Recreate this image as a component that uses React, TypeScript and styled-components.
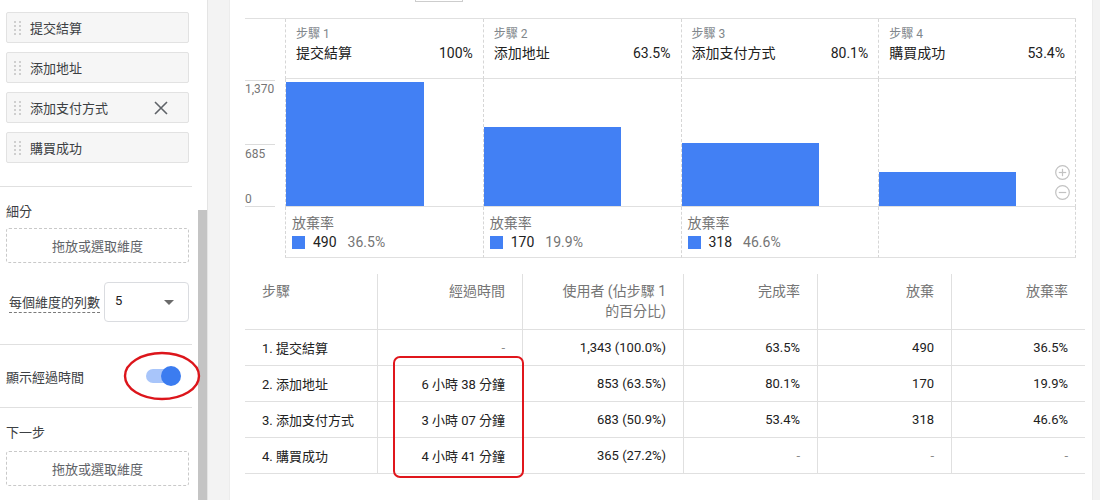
import React from 'react';
import styled, { createGlobalStyle } from 'styled-components';

const FONT = `Roboto, "Noto Sans CJK TC", "Noto Sans", sans-serif`;
const BLUE = '#4280f4';
const GRID = '#e0e0e0';
const DASH = '#d6d6d6';

const Global = createGlobalStyle`
  html, body { margin: 0; padding: 0; }
  body { font-family: ${FONT}; background: #f3f3f3; color: #212121; }
  * { box-sizing: border-box; }
`;

const Page = styled.div`
  display: flex;
  width: 1100px;
  height: 500px;
  overflow: hidden;
  background: #f3f3f3;
`;

/* ---------- Sidebar ---------- */
const Sidebar = styled.aside`
  width: 208px;
  flex: none;
  background: #fff;
  border-right: 1px solid #e4e4e4;
  display: flex;
`;
const SidebarContent = styled.div`
  width: 192px;
  flex: none;
  display: flex;
  flex-direction: column;
`;
const ScrollTrack = styled.div`
  width: 9px;
  margin-left: 6px;
  display: flex;
  flex-direction: column;
`;
const ScrollThumb = styled.div`
  margin-top: 210px;
  flex: 1;
  background: #c4c4c4;
`;
const StepList = styled.div`
  display: flex;
  flex-direction: column;
  gap: 9px;
  padding: 12px 3px 0 6px;
`;
const StepItem = styled.div`
  height: 31px;
  display: flex;
  align-items: center;
  padding-left: 7px;
  background: #f6f6f6;
  border: 1px solid #e2e2e2;
  border-radius: 2px;
  font-size: 13px;
  color: #3c4043;
`;
const DragHandle = styled.span`
  display: grid;
  grid-template-columns: 2px 2px;
  column-gap: 3px;
  row-gap: 2px;
  margin-right: 9px;
  i {
    width: 2px;
    height: 2px;
    background: #cfcfcf;
  }
`;
const RemoveButton = styled.span`
  margin-left: auto;
  margin-right: 20px;
  display: flex;
  color: #5f6368;
`;
const Divider = styled.div<{ $mt: number }>`
  height: 1px;
  background: ${GRID};
  margin-top: ${(p) => p.$mt}px;
`;
const Section = styled.div`
  padding: 16px 3px 0 6px;
  display: flex;
  flex-direction: column;
`;
const SectionLabel = styled.div`
  font-size: 13px;
  line-height: 18px;
  color: #3c4043;
`;
const DropZone = styled.div<{ $mt: number }>`
  margin-top: ${(p) => p.$mt}px;
  height: 35px;
  border: 1px dashed #c9c9c9;
  border-radius: 3px;
  display: flex;
  align-items: center;
  justify-content: center;
  font-size: 13px;
  color: #5f6368;
`;
const RowsControl = styled.div`
  margin-top: 19px;
  display: flex;
  align-items: center;
  justify-content: space-between;
`;
const UnderlinedLabel = styled.span`
  margin-left: 3px;
  margin-top: 4px;
  font-size: 13px;
  line-height: 16px;
  color: #3c4043;
  border-bottom: 1px dashed #7a7a7a;
  padding-bottom: 1px;
`;
const SelectBox = styled.div`
  width: 85px;
  height: 40px;
  border: 1px solid #dadce0;
  border-radius: 4px;
  display: flex;
  align-items: center;
  justify-content: space-between;
  padding: 0 14px 3px 10px;
  font-size: 13px;
  color: #212121;
`;
const Caret = styled.span`
  width: 0;
  height: 0;
  margin-top: 4px;
  border-left: 5px solid transparent;
  border-right: 5px solid transparent;
  border-top: 5px solid #6b6b6b;
`;
const ToggleRow = styled.div`
  height: 62px;
  display: flex;
  align-items: center;
  justify-content: space-between;
  padding: 0 11px 0 6px;
  font-size: 13px;
  color: #3c4043;
`;
const Toggle = styled.span`
  position: relative;
  width: 35px;
  height: 20px;
  display: flex;
  align-items: center;
`;
const ToggleTrack = styled.span`
  width: 34px;
  height: 14px;
  border-radius: 7px;
  background: #a8c5fa;
`;
const ToggleKnob = styled.span`
  position: absolute;
  right: 0;
  top: 0;
  width: 20px;
  height: 20px;
  border-radius: 50%;
  background: #3b7cf0;
`;
const Annotation = styled.svg`
  position: absolute;
  left: -23px;
  top: -15px;
  overflow: visible;
  pointer-events: none;
`;

/* ---------- Main card ---------- */
const Card = styled.main`
  margin-left: 21px;
  width: 864px;
  flex: none;
  background: #fff;
  border-left: 1px solid #ececec;
  border-right: 1px solid #ececec;
  padding-left: 15px;
  display: flex;
  flex-direction: column;
`;
const TopStrip = styled.div`
  height: 18px;
  display: flex;
`;
const TabStub = styled.span`
  margin-left: 170px;
  width: 48px;
  height: 2px;
  border: 1px solid #cdcdcd;
  border-top: none;
`;
const Chart = styled.div`
  width: 831px;
  display: grid;
  grid-template-columns: 40px repeat(4, 1fr);
  grid-template-rows: 60px 128px 51px;
  border-top: 1px solid ${GRID};
`;
const AxisCell = styled.div`
  position: relative;
`;
const AxisLine = styled.span<{ $top: number }>`
  position: absolute;
  left: 0;
  top: ${(p) => p.$top}px;
  width: 30px;
  border-top: 1px solid #dcdcdc;
`;
const AxisLabel = styled.span<{ $top: number }>`
  position: absolute;
  left: 0;
  top: ${(p) => p.$top}px;
  font-size: 12px;
  line-height: 14px;
  color: #757575;
`;
const ColumnCell = styled.div<{ $last?: boolean }>`
  border-left: 1px dashed ${DASH};
  border-right: ${(p) => (p.$last ? `1px dashed ${DASH}` : 'none')};
  border-bottom: 1px solid ${GRID};
  min-width: 0;
`;
const HeaderCell = styled(ColumnCell)`
  padding: 7px 10px 0 10px;
`;
const StepLabel = styled.div`
  font-size: 12px;
  line-height: 16px;
  color: #80868b;
`;
const StepNameRow = styled.div`
  margin-top: 1px;
  display: flex;
  justify-content: space-between;
  font-size: 14px;
  line-height: 20px;
  color: #212121;
`;
const PlotCell = styled(ColumnCell)`
  position: relative;
  display: flex;
  align-items: flex-end;
`;
const Bar = styled.div`
  width: 70%;
  background: ${BLUE};
`;
const ZoomControls = styled.div`
  position: absolute;
  right: 5px;
  top: 86px;
  display: flex;
  flex-direction: column;
  gap: 5px;
`;
const FooterCell = styled(ColumnCell)`
  padding: 7px 6px 0 6px;
`;
const FooterLabel = styled.div`
  font-size: 14px;
  line-height: 18px;
  color: #757575;
`;
const LegendRow = styled.div`
  margin-top: 1px;
  height: 18px;
  display: flex;
  align-items: center;
  font-size: 14px;
`;
const Swatch = styled.span`
  width: 13px;
  height: 13px;
  background: ${BLUE};
  margin-right: 8px;
`;
const Count = styled.span`
  color: #212121;
`;
const Rate = styled.span`
  margin-left: 11px;
  color: #757575;
`;

/* ---------- Table ---------- */
const TableWrap = styled.div`
  position: relative;
  margin-top: 16px;
  width: 840px;
`;
const TableGrid = styled.div`
  display: grid;
  grid-template-columns: 132px 145px 161px 134px 134px 134px;
`;
const TH = styled.div<{ $first?: boolean }>`
  height: 56px;
  padding: 7px 17px 0 17px;
  font-size: 14px;
  line-height: 20px;
  color: #757575;
  text-align: ${(p) => (p.$first ? 'left' : 'right')};
  border-bottom: 1px solid ${GRID};
  border-left: ${(p) => (p.$first ? 'none' : `1px solid ${GRID}`)};
`;
const TD = styled.div<{ $first?: boolean; $muted?: boolean }>`
  height: 36px;
  display: flex;
  align-items: center;
  justify-content: ${(p) => (p.$first ? 'flex-start' : 'flex-end')};
  padding: 0 17px;
  font-size: 13px;
  color: ${(p) => (p.$muted ? '#8a8a8a' : '#212121')};
  border-bottom: 1px solid ${GRID};
  border-left: ${(p) => (p.$first ? 'none' : `1px solid ${GRID}`)};
`;
const Highlight = styled.div`
  position: absolute;
  left: 148px;
  top: 82px;
  width: 131px;
  height: 122px;
  border: 2.5px solid #e0161c;
  border-radius: 7px;
  pointer-events: none;
`;

/* ---------- Data ---------- */
const steps = [
  { n: 1, name: '提交結算', pct: '100%', users: 1343, drop: '490', dropRate: '36.5%' },
  { n: 2, name: '添加地址', pct: '63.5%', users: 853, drop: '170', dropRate: '19.9%' },
  { n: 3, name: '添加支付方式', pct: '80.1%', users: 683, drop: '318', dropRate: '46.6%' },
  { n: 4, name: '購買成功', pct: '53.4%', users: 365, drop: null, dropRate: null },
];

const rows = [
  ['1. 提交結算', '-', '1,343 (100.0%)', '63.5%', '490', '36.5%'],
  ['2. 添加地址', '6 小時 38 分鐘', '853 (63.5%)', '80.1%', '170', '19.9%'],
  ['3. 添加支付方式', '3 小時 07 分鐘', '683 (50.9%)', '53.4%', '318', '46.6%'],
  ['4. 購買成功', '4 小時 41 分鐘', '365 (27.2%)', '-', '-', '-'],
];

const MAX = 1370;
const PLOT_H = 127;

const Handle = () => (
  <DragHandle>
    {Array.from({ length: 8 }).map((_, i) => (
      <i key={i} />
    ))}
  </DragHandle>
);

const CircleIcon = ({ plus }: { plus?: boolean }) => (
  <svg width="15" height="15" viewBox="0 0 15 15">
    <circle cx="7.5" cy="7.5" r="6.8" fill="none" stroke="#c2c2c2" strokeWidth="1.2" />
    <line x1="3.8" y1="7.5" x2="11.2" y2="7.5" stroke="#c2c2c2" strokeWidth="1.2" />
    {plus && <line x1="7.5" y1="3.8" x2="7.5" y2="11.2" stroke="#c2c2c2" strokeWidth="1.2" />}
  </svg>
);

export default function App() {
  return (
    <>
      <Global />
      <Page>
        <Sidebar>
          <SidebarContent>
            <StepList>
              {steps.map((s) => (
                <StepItem key={s.n}>
                  <Handle />
                  {s.name}
                  {s.n === 3 && (
                    <RemoveButton>
                      <svg width="14" height="14" viewBox="0 0 14 14">
                        <path d="M1 1 L13 13 M13 1 L1 13" stroke="#5f6368" strokeWidth="1.6" />
                      </svg>
                    </RemoveButton>
                  )}
                </StepItem>
              ))}
            </StepList>
            <Divider $mt={23} />
            <Section>
              <SectionLabel>細分</SectionLabel>
              <DropZone $mt={7}>拖放或選取維度</DropZone>
              <RowsControl>
                <UnderlinedLabel>每個維度的列數</UnderlinedLabel>
                <SelectBox>
                  5
                  <Caret />
                </SelectBox>
              </RowsControl>
            </Section>
            <Divider $mt={22} />
            <ToggleRow>
              顯示經過時間
              <Toggle>
                <ToggleTrack />
                <ToggleKnob />
                <Annotation width="78" height="50" viewBox="0 0 78 50">
                  <ellipse cx="39" cy="25" rx="37" ry="23" fill="none" stroke="#dc151b" strokeWidth="2.4" />
                </Annotation>
              </Toggle>
            </ToggleRow>
            <Divider $mt={0} />
            <Section>
              <SectionLabel>下一步</SectionLabel>
              <DropZone $mt={9}>拖放或選取維度</DropZone>
            </Section>
          </SidebarContent>
          <ScrollTrack>
            <ScrollThumb />
          </ScrollTrack>
        </Sidebar>

        <Card>
          <TopStrip>
            <TabStub />
          </TopStrip>
          <Chart>
            <div />
            {steps.map((s) => (
              <HeaderCell key={`h${s.n}`} $last={s.n === 4}>
                <StepLabel>步驟 {s.n}</StepLabel>
                <StepNameRow>
                  <span>{s.name}</span>
                  <span>{s.pct}</span>
                </StepNameRow>
              </HeaderCell>
            ))}
            <AxisCell>
              <AxisLine $top={1} />
              <AxisLabel $top={3}>1,370</AxisLabel>
              <AxisLine $top={65} />
              <AxisLabel $top={68}>685</AxisLabel>
              <AxisLabel $top={113}>0</AxisLabel>
              <AxisLine $top={127} />
            </AxisCell>
            {steps.map((s) => (
              <PlotCell key={`p${s.n}`} $last={s.n === 4}>
                <Bar style={{ height: `${(s.users / MAX) * PLOT_H}px` }} />
                {s.n === 4 && (
                  <ZoomControls>
                    <CircleIcon plus />
                    <CircleIcon />
                  </ZoomControls>
                )}
              </PlotCell>
            ))}
            <div />
            {steps.map((s) => (
              <FooterCell key={`f${s.n}`} $last={s.n === 4}>
                {s.drop && (
                  <>
                    <FooterLabel>放棄率</FooterLabel>
                    <LegendRow>
                      <Swatch />
                      <Count>{s.drop}</Count>
                      <Rate>{s.dropRate}</Rate>
                    </LegendRow>
                  </>
                )}
              </FooterCell>
            ))}
          </Chart>

          <TableWrap>
            <TableGrid>
              <TH $first>步驟</TH>
              <TH>經過時間</TH>
              <TH>
                使用者 (佔步驟 1
                <br />
                的百分比)
              </TH>
              <TH>完成率</TH>
              <TH>放棄</TH>
              <TH>放棄率</TH>
              {rows.map((r, ri) =>
                r.map((c, ci) => (
                  <TD key={`${ri}-${ci}`} $first={ci === 0} $muted={c === '-'}>
                    {c}
                  </TD>
                ))
              )}
            </TableGrid>
            <Highlight />
          </TableWrap>
        </Card>
      </Page>
    </>
  );
}
